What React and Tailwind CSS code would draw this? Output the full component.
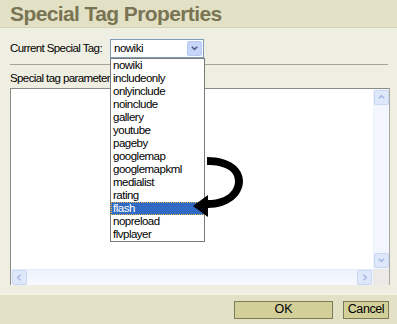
import React from 'react';

const tags = ['nowiki', 'includeonly', 'onlyinclude', 'noinclude', 'gallery', 'youtube', 'pageby', 'googlemap', 'googlemapkml', 'medialist', 'rating', 'flash', 'nopreload', 'flvplayer'];

const font = { fontFamily: '"Liberation Sans", Arial, sans-serif' };

const Chevron = ({ dir = 'down', color = '#4d6185', size = 9 }) => {
  const d = {
    down: 'M2 3 L5 6 L8 3',
    up: 'M2 6 L5 3 L8 6',
    left: 'M6 2 L3 5 L6 8',
    right: 'M4 2 L7 5 L4 8',
  }[dir];
  return (
    <svg width={size} height={size} viewBox="0 0 10 10">
      <path d={d} fill="none" stroke={color} strokeWidth="1.8" />
    </svg>
  );
};

const ScrollBtn = ({ dir }) => (
  <div className="w-[15px] h-[15px] rounded-[2px] border border-[#c9d7f3] bg-[#dfe8fb] flex items-center justify-center">
    <Chevron dir={dir} color="#a8bbe2" size={9} />
  </div>
);

export default function App() {
  return (
    <div className="relative w-[397px] h-[324px] flex flex-col bg-[#efeee2] text-black overflow-hidden" style={font}>
      {/* title bar */}
      <div className="h-[28px] shrink-0 bg-[#e3e1c5] border-b border-[#d6d4b4] pl-[10px] flex items-center">
        <h1 className="text-[21px] font-bold tracking-[-0.6px] text-[#797453] leading-none">Special Tag Properties</h1>
      </div>

      {/* body */}
      <div className="flex-1 flex flex-col px-[10px] pt-[11px]">
        <div className="flex items-center h-[19px] text-[11.5px] tracking-[-0.6px]">
          <span className="w-[100px]">Current Special Tag:</span>
          <div className="relative z-10">
            <div className="w-[94px] h-[19px] border border-[#7f9db9] bg-white flex items-center justify-between pl-[3px] pr-[1px]">
              <span className="text-[11.5px] tracking-[-0.5px]">nowiki</span>
              <div className="w-[15px] h-[15px] rounded-[2px] border border-[#b4c8f4] bg-[#c7d6f8] flex items-center justify-center">
                <Chevron dir="down" color="#4d6185" size={9} />
              </div>
            </div>
            <div className="absolute left-0 top-[19px] w-[95px] border border-[#7a7a7a] bg-white">
              {tags.map((t) => (
                <div
                  key={t}
                  className={
                    t === 'flash'
                      ? 'h-[13px] pl-[1px] text-[11.5px] tracking-[-0.5px] bg-[#316ac5] text-white border border-dotted border-[#e6b04a] leading-[11px]'
                      : 'h-[13px] leading-[13px] pl-[2px] text-[11.5px] tracking-[-0.5px] text-black'
                  }
                >
                  {t}
                </div>
              ))}
            </div>
          </div>
        </div>

        <div className="mt-[6px] h-px bg-[#a6a595] w-[378px]" />

        <div className="mt-[6px] h-[14px] text-[11.5px] tracking-[-0.6px] leading-[14px]">Special tag parameters:</div>

        <div className="mt-[3px] w-[380px] h-[197px] border-l border-t border-r border-[#8c8c84] border-r-[#a9a99f] flex flex-col bg-white">
          <div className="flex-1 flex">
            <div className="flex-1" />
            <div className="w-[16px] bg-[#f3f6fd] border-l border-[#eef2fb] flex flex-col justify-between items-center py-[1px]">
              <ScrollBtn dir="up" />
              <ScrollBtn dir="down" />
            </div>
          </div>
          <div className="h-[16px] flex">
            <div className="flex-1 bg-gradient-to-b from-[#edf2fd] to-[#f7f9fe] border-t border-[#e4ebfb] flex items-center justify-between pl-[1px] pr-[1px]">
              <ScrollBtn dir="left" />
              <ScrollBtn dir="right" />
            </div>
            <div className="w-[16px] bg-[#ece9e6]" />
          </div>
        </div>
      </div>

      {/* footer */}
      <div className="h-[30px] shrink-0 bg-[#e3e1c5] border-t border-[#f6f5ea] flex items-center justify-end gap-[10px] pr-[8px]">
        <button className="w-[99px] h-[18px] bg-[#d2cf98] border border-[#7d7b58] text-[12.5px] leading-none">OK</button>
        <button className="w-[46px] h-[18px] bg-[#d2cf98] border border-[#7d7b58] text-[12.5px] leading-none tracking-[-0.4px]">Cancel</button>
      </div>

      {/* annotation arrow */}
      <svg className="absolute left-0 top-0 z-20 pointer-events-none" width="397" height="324" viewBox="0 0 397 324">
        <path
          d="M207,157 C230,157 243,168 243,181 C243,196 228,208 208,208 L208,217 L193,206 L208,195 L208,200 C225,200 235,192 235,181 C235,171 225,165 207,165 Z"
          fill="#000"
        />
      </svg>
    </div>
  );
}
